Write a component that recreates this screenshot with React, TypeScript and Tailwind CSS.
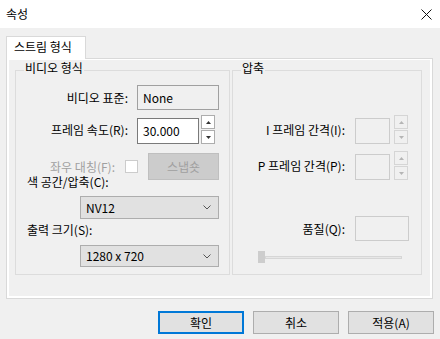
import React from 'react';

const FONT = "font-['Noto_Sans_CJK_KR','Noto_Sans',sans-serif]";

const Arrow = ({ up }: { up?: boolean }) => (
  <svg width="5" height="3" viewBox="0 0 5 3">
    <path d={up ? 'M0 3 L2.5 0 L5 3Z' : 'M0 0 L2.5 3 L5 0Z'} fill="currentColor" />
  </svg>
);

const Spinner = ({ disabled }: { disabled?: boolean }) => {
  const box = disabled
    ? 'border-[#d5d5d5] bg-[#f0f0f0] text-[#b5b5b5]'
    : 'border-[#adadad] bg-white text-[#333333]';
  return (
    <div className="flex flex-col gap-[1px] w-[14px] h-[29px]">
      <div className={`flex-1 border ${box} flex items-center justify-center`}>
        <Arrow up />
      </div>
      <div className={`flex-1 border ${box} flex items-center justify-center`}>
        <Arrow />
      </div>
    </div>
  );
};

const Combo = ({ value, h }: { value: string; h: string }) => (
  <div className={`ml-[64px] w-[139px] ${h} border border-[#adadad] bg-[#e1e1e1] flex items-center justify-between pl-[5px] pr-[7px]`}>
    <span>{value}</span>
    <svg width="8" height="5" viewBox="0 0 8 5">
      <path d="M0.5 0.5 L4 4 L7.5 0.5" stroke="#555555" fill="none" strokeWidth="1" />
    </svg>
  </div>
);

const Group = ({ title, width, children }: { title: string; width: string; children: React.ReactNode }) => (
  <div className={`relative ${width} h-[205px] border border-[#dcdcdc]`}>
    <span className="absolute -top-[11px] left-[8px] px-[1px] bg-[#f0f0f0] leading-[16px]">{title}</span>
    {children}
  </div>
);

const Button = ({ label, primary, width }: { label: string; primary?: boolean; width: string }) => (
  <div
    className={`${width} h-[23px] flex items-center justify-center bg-[#e1e1e1] ${
      primary ? 'border-2 border-[#0078d7]' : 'border border-[#adadad]'
    }`}
  >
    {label}
  </div>
);

export default function App() {
  return (
    <div className={`${FONT} w-[440px] h-[339px] bg-[#f0f0f0] text-[12px] leading-[16px] text-black overflow-hidden`}>
      {/* title bar */}
      <div className="h-[28px] bg-white flex items-center justify-between pl-[6px] pr-[8px]">
        <span>속성</span>
        <svg width="11" height="11" viewBox="0 0 11 11">
          <path d="M0.5 0.5 L10.5 10.5 M10.5 0.5 L0.5 10.5" stroke="#111111" strokeWidth="1" />
        </svg>
      </div>

      <div className="pt-[8px] pl-[6px] pr-[7px]">
        {/* tab */}
        <div className="relative z-10 w-[80px] h-[23px] -mb-px border border-b-0 border-[#d9d9d9] bg-white pl-[7px] pt-[2px]">
          스트림 형식
        </div>

        {/* tab panel */}
        <div className="h-[241px] border border-[#d9d9d9]">
          <div className="h-full border-2 border-t border-white pl-[6px] pt-[10px] flex gap-[2px]">
            <Group title="비디오 형식" width="w-[215px]">
              <div className="flex flex-col">
                <div className="mt-[14px] h-[25px] flex items-center">
                  <span className="w-[112px] text-right">비디오 표준:</span>
                  <div className="ml-[9px] w-[82px] h-[25px] border border-[#a0a0a0] bg-[#f0f0f0] flex items-center pl-[5px]">
                    None
                  </div>
                </div>
                <div className="mt-[5px] h-[29px] flex items-end">
                  <span className="w-[112px] text-right self-center">프레임 속도(R):</span>
                  <div className="ml-[9px] w-[62px] h-[26px] border border-[#7a7a7a] bg-white flex items-center pl-[5px]">
                    30.000
                  </div>
                  <div className="ml-[2px]">
                    <Spinner />
                  </div>
                </div>
                <div className="mt-[9px] h-[27px] flex items-center">
                  <span className="w-[99px] text-right text-[#a0a0a0]">좌우 대칭(F):</span>
                  <div className="ml-[10px] w-[13px] h-[13px] border border-[#cccccc] bg-white" />
                  <div className="ml-[10px] w-[71px] h-[27px] border border-[#bfbfbf] bg-[#cccccc] text-[#a0a0a0] flex items-center justify-center">
                    스냅숏
                  </div>
                </div>
                <div className="-mt-[6px] pl-[11px]">색 공간/압축(C):</div>
                <div className="mt-[6px]">
                  <Combo value="NV12" h="h-[23px]" />
                </div>
                <div className="mt-[3px] pl-[11px]">출력 크기(S):</div>
                <div className="mt-[7px]">
                  <Combo value="1280 x 720" h="h-[22px]" />
                </div>
              </div>
            </Group>

            <Group title="압축" width="w-[190px]">
              <div className="flex flex-col">
                <div className="mt-[44px] h-[29px] flex items-end">
                  <span className="w-[112px] text-right self-center">I 프레임 간격(I):</span>
                  <div className="ml-[10px] w-[35px] h-[26px] border border-[#cccccc] bg-[#f0f0f0]" />
                  <div className="ml-[4px]">
                    <Spinner disabled />
                  </div>
                </div>
                <div className="mt-[7px] h-[29px] flex items-end">
                  <span className="w-[112px] text-right self-center">P 프레임 간격(P):</span>
                  <div className="ml-[10px] w-[35px] h-[26px] border border-[#cccccc] bg-[#f0f0f0]" />
                  <div className="ml-[4px]">
                    <Spinner disabled />
                  </div>
                </div>
                <div className="mt-[36px] h-[25px] flex items-center">
                  <span className="w-[112px] text-right">품질(Q):</span>
                  <div className="ml-[10px] w-[54px] h-[25px] border border-[#cccccc] bg-[#f0f0f0]" />
                </div>
                <div className="mt-[10px] ml-[25px] w-[144px] h-[12px] flex items-center">
                  <div className="w-[7px] h-[12px] bg-[#cdcdcd]" />
                  <div className="flex-1 h-[3px] border border-[#d6d6d6] bg-[#e7e7e7]" />
                </div>
              </div>
            </Group>
          </div>
        </div>

        {/* buttons */}
        <div className="mt-[12px] -mr-px flex justify-end gap-[9px]">
          <Button label="확인" primary width="w-[86px]" />
          <Button label="취소" width="w-[86px]" />
          <Button label="적용(A)" width="w-[86px]" />
        </div>
      </div>
    </div>
  );
}
